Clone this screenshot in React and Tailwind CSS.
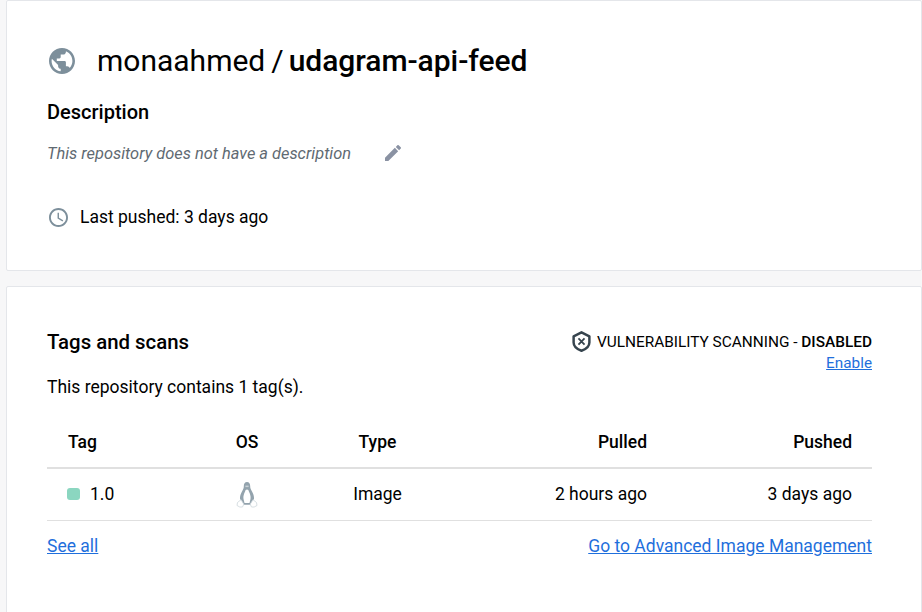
import React from 'react';

function GlobeIcon() {
  return (
    <svg viewBox="2 2 20 20" className="w-[26px] h-[26px] fill-[#7d8f9b]">
      <path d="M12 2C6.48 2 2 6.48 2 12s4.48 10 10 10 10-4.48 10-10S17.52 2 12 2zm-1 17.93c-3.95-.49-7-3.85-7-7.93 0-.62.08-1.21.21-1.79L9 15v1c0 1.1.9 2 2 2v1.93zm6.9-2.54c-.26-.81-1-1.39-1.9-1.39h-1v-3c0-.55-.45-1-1-1H8v-2h2c.55 0 1-.45 1-1V7h2c1.1 0 2-.9 2-2v-.41c2.93 1.19 5 4.06 5 7.41 0 2.08-.8 3.97-2.1 5.39z" />
    </svg>
  );
}

function PencilIcon() {
  return (
    <svg viewBox="3 3 18 18" className="w-[16px] h-[16px] fill-[#8a92a3]">
      <path d="M3 17.25V21h3.75L17.81 9.94l-3.75-3.75L3 17.25zM20.71 7.04a1 1 0 0 0 0-1.41l-2.34-2.34a1 1 0 0 0-1.41 0l-1.83 1.83 3.75 3.75 1.83-1.83z" />
    </svg>
  );
}

function ClockIcon() {
  return (
    <svg viewBox="2 2 20 20" className="w-[19px] h-[19px] fill-[#7d8f9b]">
      <path d="M11.99 2C6.47 2 2 6.48 2 12s4.47 10 9.99 10C17.52 22 22 17.52 22 12S17.52 2 11.99 2zM12 20c-4.42 0-8-3.58-8-8s3.58-8 8-8 8 3.58 8 8-3.58 8-8 8zm.5-13H11v6l5.25 3.15.75-1.23-4.5-2.67V7z" />
    </svg>
  );
}

function ShieldIcon() {
  return (
    <svg viewBox="0 0 20 22" className="w-[19px] h-[21px]" fill="none" stroke="#36444e">
      <path d="M10 1.300 18.300 5.500v6.500c0 4-3.500 7-8.300 8.700C5.200 19 1.700 16 1.700 12V5.500z" strokeWidth="2.600" strokeLinejoin="round" />
      <path d="M6.800 7.800l6.400 6.400M13.200 7.800l-6.400 6.400" strokeWidth="1.900" />
    </svg>
  );
}

function TuxIcon() {
  return (
    <svg viewBox="0 0 22 27" className="w-[22px] h-[27px]">
      <path d="M11 1c-2.200 0-3.200 1.800-3.200 4.200 0 2-.6 3.200-1.800 5.300-1.300 2.300-2.200 4.700-2 7.300l2.500 6h9l2.500-6c.2-2.600-.7-5-2-7.300-1.200-2.100-1.800-3.300-1.800-5.300C14.200 2.800 13.200 1 11 1z" fill="#93a3ad" />
      <path d="M9.400 4.600h3.200v1.500H9.400z" fill="#c9d2d7" />
      <path d="M11 8.500c-1.100 0-1.600.9-2 2.300-1 2-2 4.600-1.500 7.200l1 4h5l1-4c.5-2.600-.5-5.200-1.500-7.200-.4-1.400-.9-2.300-2-2.300z" fill="#fff" />
      <path d="M1.500 21.500l3.500-2.800 2.800 4.500-1.300 2.800H3.800L1 24.500zM20.500 21.500 17 18.700l-2.800 4.500 1.300 2.800h2.700l2.800-1.500z" fill="#fff" stroke="#cdd5da" strokeWidth="0.800" />
    </svg>
  );
}

export default function App() {
  return (
    <div className="h-[612px] overflow-hidden bg-[#f7f7f8] pl-[6px] text-black font-['Roboto',sans-serif]">
      <section className="h-[271px] bg-white border border-[#e4e6ea] rounded-[2px] pl-[40px]">
        <div className="flex items-center pt-[37px]">
          <span className="ml-[2px]"><GlobeIcon /></span>
          <h1 className="ml-[22px] text-[30px] leading-[46px] font-normal text-black">
            monaahmed<span className="ml-[6px] mr-[5px]">/</span><span className="font-medium tracking-[-0.05px]">udagram-api-feed</span>
          </h1>
        </div>
        <h2 className="mt-[16px] text-[20px] leading-[24px] font-medium">Description</h2>
        <div className="flex items-center mt-[18px] h-[24px]">
          <p className="text-[16.4px] italic text-[#5f6a72]">This repository does not have a description</p>
          <span className="ml-[34px] -mt-[2px]"><PencilIcon /></span>
        </div>
        <div className="flex items-center mt-[39px] h-[24px]">
          <span className="ml-[2px]"><ClockIcon /></span>
          <span className="ml-[12px] text-[17.5px] text-black">Last pushed: 3 days ago</span>
        </div>
      </section>

      <section className="mt-[15px] h-[341px] bg-white border border-[#e4e6ea] rounded-[2px] pl-[40px] pr-[49px]">
        <div className="flex justify-between pt-[42px]">
          <h2 className="text-[20.4px] leading-[26px] font-medium">Tags and scans</h2>
          <div className="flex flex-col items-end">
            <div className="flex items-center text-[15.4px] leading-[24px] text-black">
              <ShieldIcon />
              <span className="ml-[6px] mt-[1px]">VULNERABILITY SCANNING - <span className="font-medium">DISABLED</span></span>
            </div>
            <a href="#" className="text-[15.3px] leading-[18px] text-[#1f6fdc] underline">Enable</a>
          </div>
        </div>
        <p className="mt-[3px] text-[17.5px] leading-[24px] text-black">This repository contains 1 tag(s).</p>
        <table className="w-full mt-[17px] table-fixed text-[17.5px]">
          <thead>
            <tr className="h-[52px] border-b-2 border-[#e0e0e0]">
              <th className="w-[153px] pl-[21px] pt-[2px] text-left font-medium">Tag</th>
              <th className="w-[94px] pt-[2px] text-center font-medium">OS</th>
              <th className="w-[167px] pt-[2px] text-center font-medium">Type</th>
              <th className="w-[186px] pt-[2px] text-right font-medium">Pulled</th>
              <th className="pr-[20px] pt-[2px] text-right font-medium">Pushed</th>
            </tr>
          </thead>
          <tbody>
            <tr className="h-[52px] border-b border-[#e0e0e0] text-black">
              <td className="pl-[20px]">
                <div className="flex items-center">
                  <span className="w-[13px] h-[12px] rounded-[3px] bg-[#8bd6c0]" />
                  <span className="ml-[10px]">1.0</span>
                </div>
              </td>
              <td><div className="flex justify-center"><TuxIcon /></div></td>
              <td className="text-center">Image</td>
              <td className="text-right">2 hours ago</td>
              <td className="pr-[20px] text-right">3 days ago</td>
            </tr>
          </tbody>
        </table>
        <div className="flex justify-between mt-[13px] text-[17.5px] leading-[24px]">
          <a href="#" className="text-[#1f6fdc] underline">See all</a>
          <a href="#" className="text-[#1f6fdc] underline">Go to Advanced Image Management</a>
        </div>
      </section>
    </div>
  );
}
